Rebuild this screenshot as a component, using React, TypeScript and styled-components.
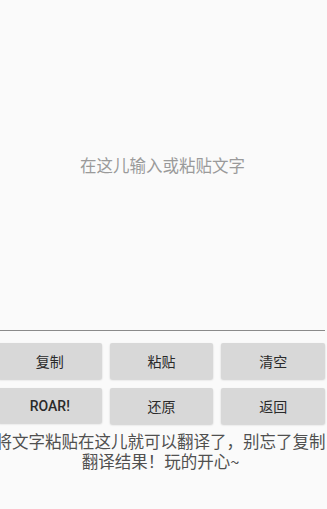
import styled, { createGlobalStyle } from "styled-components";

const GlobalStyle = createGlobalStyle`
  html, body {
    margin: 0;
    padding: 0;
    background: #fafafa;
  }
  body {
    font-family: "Noto Sans CJK SC", "Roboto", "Noto Sans", sans-serif;
  }
`;

const Screen = styled.div`
  width: 327px;
  height: 509px;
  overflow: hidden;
  background: #fafafa;
  display: flex;
  flex-direction: column;
`;

const Editor = styled.div`
  height: 330px;
  margin-right: 2px;
  border-bottom: 1px solid #8a8a8a;
  display: flex;
  align-items: center;
  justify-content: center;
  font-size: 16.5px;
  color: #9a9a9a;
  flex-shrink: 0;
`;

const ButtonGrid = styled.div`
  display: grid;
  grid-template-columns: repeat(3, 1fr);
  column-gap: 8px;
  row-gap: 9px;
  margin: 12px 2px 0 -2px;
`;

const Button = styled.button<{ $latin?: boolean }>`
  height: ${({ $latin }) => ($latin ? "35px" : "36px")};
  border: none;
  border-radius: 2px;
  background: #d8d8d8;
  box-shadow: 0 1px 2px rgba(0, 0, 0, 0.18);
  color: #2a2a2a;
  font-family: ${({ $latin }) =>
    $latin ? '"Roboto", sans-serif' : '"Noto Sans CJK SC", sans-serif'};
  font-size: 14px;
  font-weight: ${({ $latin }) => ($latin ? 500 : 400)};
  padding: 0;
`;

const Hint = styled.p`
  width: 334px;
  margin: 7px 0 0 -6.5px;
  font-size: 16.5px;
  line-height: 20px;
  color: #505050;
  text-align: center;
`;

export default function App() {
  return (
    <Screen>
      <GlobalStyle />
      <Editor>在这儿输入或粘贴文字</Editor>
      <ButtonGrid>
        <Button>复制</Button>
        <Button>粘贴</Button>
        <Button>清空</Button>
        <Button $latin>ROAR!</Button>
        <Button>还原</Button>
        <Button>返回</Button>
      </ButtonGrid>
      <Hint>将文字粘贴在这儿就可以翻译了，别忘了复制翻译结果！玩的开心~</Hint>
    </Screen>
  );
}
